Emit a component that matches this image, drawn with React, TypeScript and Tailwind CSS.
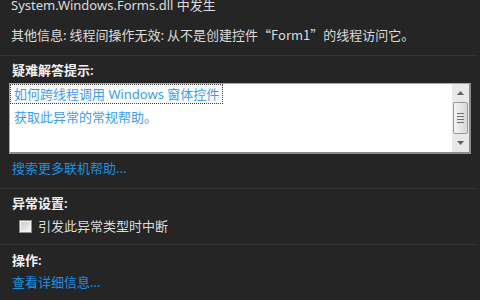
const font = { fontFamily: '"Noto Sans", "Noto Sans CJK SC", sans-serif' };
const cjkFirst = { fontFamily: '"Noto Sans CJK SC", "Noto Sans", sans-serif' };

function Checkbox() {
  return (
    <span className="flex h-[13px] w-[13px] items-center justify-center border border-[#8e8f8f] bg-[#f4f4f4]">
      <span className="h-[9px] w-[9px] bg-gradient-to-br from-[#cbcbcb] to-[#f6f6f6]" />
    </span>
  );
}

function ScrollBar() {
  return (
    <div className="flex h-full w-[17px] flex-col items-center bg-[#e9e9e9]">
      <div className="flex h-[18px] w-full items-center justify-center">
        <svg width="7" height="4" viewBox="0 0 7 4">
          <path d="M3.5 0 L7 4 L0 4 Z" fill="#606060" />
        </svg>
      </div>
      <div className="flex h-[32px] w-[15px] flex-col items-center justify-center gap-[2px] rounded-[2px] border border-[#9a9a9a] bg-gradient-to-r from-[#f4f4f4] to-[#d8d8d8]">
        <span className="h-px w-[7px] bg-[#707070]" />
        <span className="h-px w-[7px] bg-[#707070]" />
        <span className="h-px w-[7px] bg-[#707070]" />
        <span className="h-px w-[7px] bg-[#707070]" />
      </div>
      <div className="flex-1" />
      <div className="flex h-[18px] w-full items-center justify-center">
        <svg width="7" height="4" viewBox="0 0 7 4">
          <path d="M0 0 L7 0 L3.5 4 Z" fill="#606060" />
        </svg>
      </div>
    </div>
  );
}

export default function App() {
  return (
    <div
      className="flex h-[300px] w-[480px] flex-col overflow-hidden bg-[#252526] text-[13px] leading-[18px] text-[#dcdcdc]"
      style={font}
    >
      <div className="mr-[2px] flex h-[56px] flex-col border-b border-[#333334] px-[11px]">
        <p className="-mt-[4px] whitespace-nowrap">System.Windows.Forms.dll 中发生</p>
        <p className="mt-[12px] whitespace-nowrap" style={cjkFirst}>
          其他信息: 线程间操作无效: 从不是创建控件“Form1”的线程访问它。
        </p>
      </div>

      <div className="mr-[2px] flex flex-col border-b border-[#333334] pt-[5px] pb-[11px]">
        <p className="px-[12px] font-semibold text-[#f1f1f1]">疑难解答提示:</p>
        <div className="mt-[4px] ml-[9px] flex h-[71px] w-[462px] border-t border-l border-r-2 border-b-2 border-t-[#a8a8a8] border-l-[#a8a8a8] border-r-[#8c8c8c] border-b-[#8c8c8c] bg-white">
          <div className="flex flex-1 flex-col">
            <span className="w-fit border border-dotted border-[#404040] pr-[3px] pl-[3px] text-[#3d9bf0]">
              如何跨线程调用 Windows 窗体控件
            </span>
            <span className="mt-[4px] pl-[4px] text-[#3d9bf0]">获取此异常的常规帮助。</span>
          </div>
          <ScrollBar />
        </div>
        <p className="mt-[5px] px-[12px] text-[#1c8fe0]">搜索更多联机帮助...</p>
      </div>

      <div className="mr-[2px] flex flex-col border-b border-[#333334] pt-[5px] pb-[9px]">
        <p className="px-[12px] font-semibold text-[#f1f1f1]">异常设置:</p>
        <label className="mt-[5px] flex items-center gap-[6px] pl-[19px]">
          <Checkbox />
          <span>引发此异常类型时中断</span>
        </label>
      </div>

      <div className="flex flex-col pt-[6px]">
        <p className="px-[12px] font-semibold text-[#f1f1f1]">操作:</p>
        <p className="mt-[4px] px-[12px] text-[#1c8fe0]">查看详细信息...</p>
      </div>
    </div>
  );
}
